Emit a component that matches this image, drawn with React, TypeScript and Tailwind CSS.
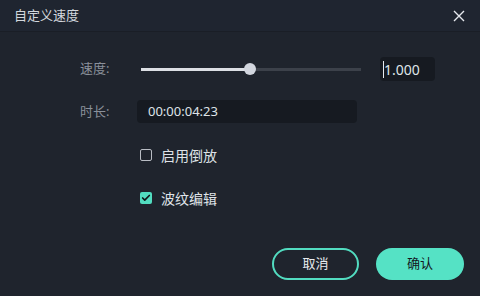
import { Check } from 'lucide-react'

export default function App() {
  const font = { fontFamily: '"Noto Sans", "Noto Sans CJK SC", sans-serif' }

  return (
    <div className="w-[480px] h-[296px] bg-[#1f242d] flex flex-col text-[13px] text-[#dde1e7]" style={font}>
      {/* 标题栏 */}
      <div className="h-[32px] shrink-0 flex items-center justify-between pl-[14px] pr-[15px] border-b border-[#1a1e26] bg-[#1f2530]">
        <span className="text-[13px] text-[#d3d7dd] leading-none">自定义速度</span>
        <svg width="12" height="12" viewBox="0 0 12 12" className="text-[#e6e9ee]">
          <path d="M1 1L11 11M11 1L1 11" stroke="currentColor" strokeWidth="1.4" fill="none" />
        </svg>
      </div>

      <div className="flex flex-col pl-[80px] pt-[25px]">
        {/* 速度 */}
        <div className="flex items-center h-[24px]">
          <span className="w-[61px] text-[#8a909a]">速度:</span>
          <div className="relative w-[220px] h-[3px] bg-[#3c414a]">
            <div className="absolute left-0 top-0 h-[3px] w-[109px] bg-[#dcdfe4]" />
            <div className="absolute left-[103px] top-[-5px] w-[12px] h-[12px] rounded-full bg-[#d2d6de]" />
          </div>
          <div className="ml-[19px] w-[55px] h-[24px] rounded-[4px] bg-[#161a21] flex items-center pl-[3px]">
            <span className="w-px h-[17px] bg-[#e6e9ee]" />
            <span className="text-[#dfe3e8] text-[14px]">1.000</span>
          </div>
        </div>

        {/* 时长 */}
        <div className="flex items-center h-[23px] mt-[19px]">
          <span className="w-[57px] text-[#8a909a]">时长:</span>
          <div className="w-[220px] h-[23px] rounded-[4px] bg-[#161a21] flex items-center pl-[11px] text-[#dfe3e8]">
            00:00:04:23
          </div>
        </div>

        {/* 启用倒放 */}
        <div className="flex items-center ml-[60px] mt-[26px] h-[12px]">
          <span className="w-[12px] h-[12px] rounded-[2px] border border-[#b9bdc4]" />
          <span className="ml-[9px] text-[14px] text-[#dfe3e8]">启用倒放</span>
        </div>

        {/* 波纹编辑 */}
        <div className="flex items-center ml-[60px] mt-[31px] h-[12px]">
          <span className="w-[12px] h-[12px] rounded-[2px] bg-[#52dcc0] flex items-center justify-center">
            <Check className="w-[10px] h-[10px] text-[#111418]" strokeWidth={4} />
          </span>
          <span className="ml-[9px] text-[14px] text-[#dfe3e8]">波纹编辑</span>
        </div>
      </div>

      {/* 按钮 */}
      <div className="flex justify-end gap-[17px] pr-[16px] mt-[44px]">
        <button className="w-[87px] h-[32px] rounded-full border-2 border-[#52dcc0] text-[#e8ebef] text-[13px]">
          取消
        </button>
        <button className="w-[88px] h-[32px] rounded-full bg-[#55e2c5] text-[#14181d] text-[13px]">
          确认
        </button>
      </div>
    </div>
  )
}
